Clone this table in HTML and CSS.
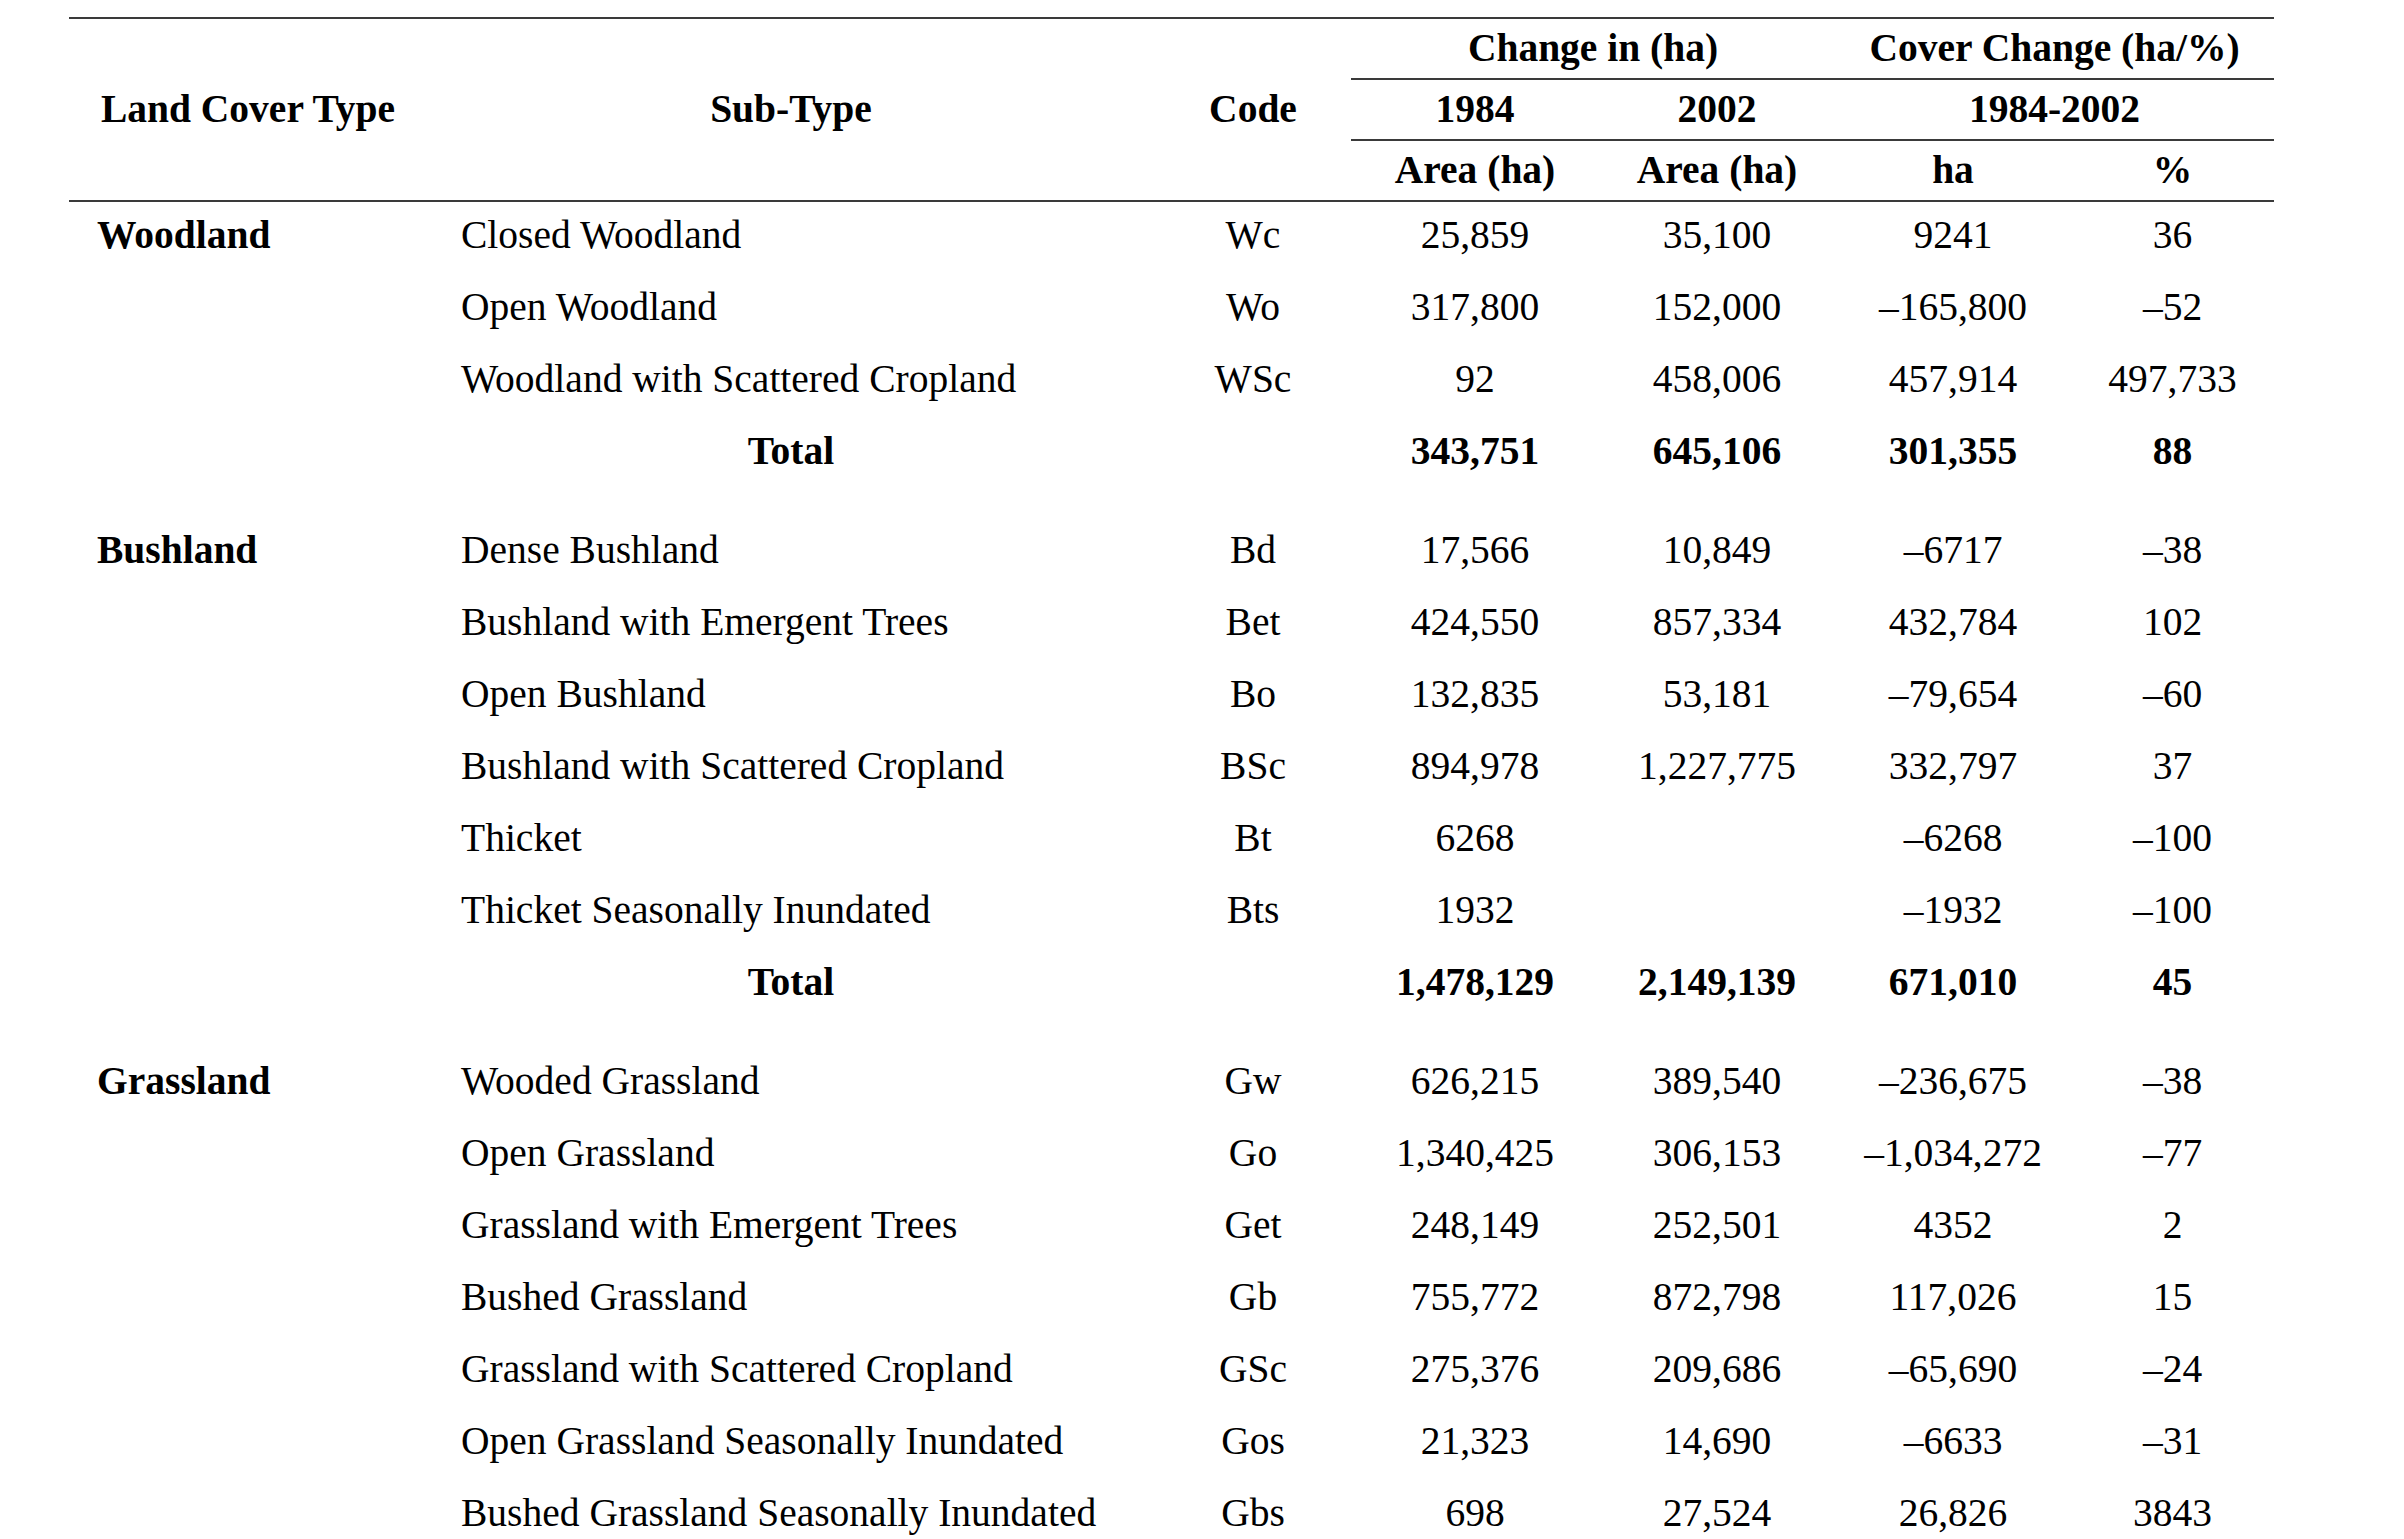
FILE: index.html
```html
<!DOCTYPE html>
<html lang="en">
<head>
<meta charset="utf-8">
<title>Land Cover Change</title>
<link rel="stylesheet" href="styles.css">
</head>
<body>
<table class="lc">
  <colgroup>
    <col class="c-type"><col class="c-sub"><col class="c-code"><col class="c-a84"><col class="c-a02"><col class="c-ha"><col class="c-pct">
  </colgroup>
  <thead>
    <tr class="h1">
      <th rowspan="3" class="h-span">Land Cover Type</th>
      <th rowspan="3" class="h-span">Sub-Type</th>
      <th rowspan="3" class="h-span">Code</th>
      <th colspan="2" class="h-group">Change in (ha)</th>
      <th colspan="2" class="h-group">Cover Change (ha/%)</th>
    </tr>
    <tr class="h2">
      <th class="h-group">1984</th>
      <th class="h-group">2002</th>
      <th colspan="2" class="h-group">1984-2002</th>
    </tr>
    <tr class="h3">
      <th>Area (ha)</th>
      <th>Area (ha)</th>
      <th>ha</th>
      <th>%</th>
    </tr>
  </thead>
  <tbody>
    <tr><td class="type">Woodland</td><td class="sub">Closed Woodland</td><td>Wc</td><td>25,859</td><td>35,100</td><td>9241</td><td>36</td></tr>
    <tr><td class="type"></td><td class="sub">Open Woodland</td><td>Wo</td><td>317,800</td><td>152,000</td><td>–165,800</td><td>–52</td></tr>
    <tr><td class="type"></td><td class="sub">Woodland with Scattered Cropland</td><td>WSc</td><td>92</td><td>458,006</td><td>457,914</td><td>497,733</td></tr>
    <tr class="total"><td class="type"></td><td>Total</td><td></td><td>343,751</td><td>645,106</td><td>301,355</td><td>88</td></tr>

    <tr><td class="type">Bushland</td><td class="sub">Dense Bushland</td><td>Bd</td><td>17,566</td><td>10,849</td><td>–6717</td><td>–38</td></tr>
    <tr><td class="type"></td><td class="sub">Bushland with Emergent Trees</td><td>Bet</td><td>424,550</td><td>857,334</td><td>432,784</td><td>102</td></tr>
    <tr><td class="type"></td><td class="sub">Open Bushland</td><td>Bo</td><td>132,835</td><td>53,181</td><td>–79,654</td><td>–60</td></tr>
    <tr><td class="type"></td><td class="sub">Bushland with Scattered Cropland</td><td>BSc</td><td>894,978</td><td>1,227,775</td><td>332,797</td><td>37</td></tr>
    <tr><td class="type"></td><td class="sub">Thicket</td><td>Bt</td><td>6268</td><td></td><td>–6268</td><td>–100</td></tr>
    <tr><td class="type"></td><td class="sub">Thicket Seasonally Inundated</td><td>Bts</td><td>1932</td><td></td><td>–1932</td><td>–100</td></tr>
    <tr class="total"><td class="type"></td><td>Total</td><td></td><td>1,478,129</td><td>2,149,139</td><td>671,010</td><td>45</td></tr>

    <tr><td class="type">Grassland</td><td class="sub">Wooded Grassland</td><td>Gw</td><td>626,215</td><td>389,540</td><td>–236,675</td><td>–38</td></tr>
    <tr><td class="type"></td><td class="sub">Open Grassland</td><td>Go</td><td>1,340,425</td><td>306,153</td><td>–1,034,272</td><td>–77</td></tr>
    <tr><td class="type"></td><td class="sub">Grassland with Emergent Trees</td><td>Get</td><td>248,149</td><td>252,501</td><td>4352</td><td>2</td></tr>
    <tr><td class="type"></td><td class="sub">Bushed Grassland</td><td>Gb</td><td>755,772</td><td>872,798</td><td>117,026</td><td>15</td></tr>
    <tr><td class="type"></td><td class="sub">Grassland with Scattered Cropland</td><td>GSc</td><td>275,376</td><td>209,686</td><td>–65,690</td><td>–24</td></tr>
    <tr><td class="type"></td><td class="sub">Open Grassland Seasonally Inundated</td><td>Gos</td><td>21,323</td><td>14,690</td><td>–6633</td><td>–31</td></tr>
    <tr><td class="type"></td><td class="sub">Bushed Grassland Seasonally Inundated</td><td>Gbs</td><td>698</td><td>27,524</td><td>26,826</td><td>3843</td></tr>
  </tbody>
</table>
</body>
</html>
```
FILE: styles.css
```css
html, body {
  margin: 0;
  padding: 0;
  background: #ffffff;
}

body {
  font-family: "Liberation Serif", "Times New Roman", serif;
  font-size: 39.5px;
  color: #000;
}

.lc {
  margin: 17px 0 0 69px;
  width: 2205px;
  border-collapse: collapse;
  table-layout: fixed;
}

.c-type { width: 358px; }
.c-sub  { width: 728px; }
.c-code { width: 196px; }
.c-a84  { width: 248px; }
.c-a02  { width: 236px; }
.c-ha   { width: 236px; }
.c-pct  { width: 203px; }

.lc thead {
  border-top: 2px solid #3a3a3a;
  border-bottom: 2px solid #3a3a3a;
}

.lc th {
  font-weight: bold;
  text-align: center;
  vertical-align: middle;
  padding: 0;
  white-space: nowrap;
}

.h1 th, .h2 th, .h3 th {
  height: 59px;
  line-height: 59px;
}

.h1 th.h-span {
  line-height: 1.2;
}

.lc th.h-group {
  border-bottom: 2px solid #3a3a3a;
}

.lc td {
  height: 64px;
  line-height: 64px;
  padding: 1px 0 7px;
  text-align: center;
  vertical-align: top;
  white-space: nowrap;
}

.lc td.type {
  text-align: left;
  font-weight: bold;
  padding-left: 28px;
}

.lc td.sub {
  text-align: left;
  padding-left: 34px;
}

.lc tr.total td {
  font-weight: bold;
  padding-bottom: 34px;
}
```
